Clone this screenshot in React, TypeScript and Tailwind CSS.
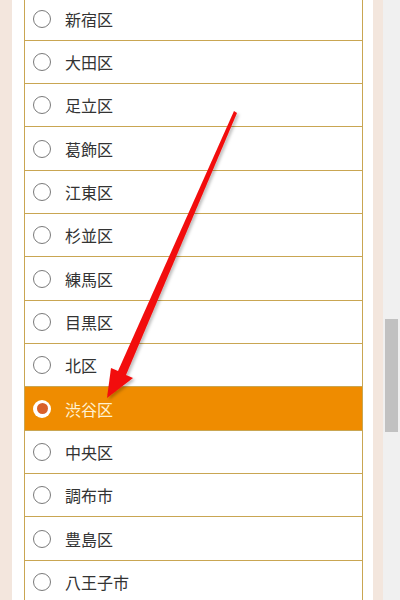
import React from 'react';

const wards = [
  '新宿区',
  '大田区',
  '足立区',
  '葛飾区',
  '江東区',
  '杉並区',
  '練馬区',
  '目黒区',
  '北区',
  '渋谷区',
  '中央区',
  '調布市',
  '豊島区',
  '八王子市',
];

const Radio = ({ checked }: { checked: boolean }) =>
  checked ? (
    <span className="w-[18px] h-[18px] rounded-full bg-white flex items-center justify-center shrink-0">
      <span className="w-[11px] h-[11px] rounded-full bg-[#d9612a]" />
    </span>
  ) : (
    <span className="w-[18px] h-[18px] rounded-full border border-[#7a7a7a] bg-white shrink-0" />
  );

const Row = ({ label, checked }: { label: string; checked: boolean }) => (
  <div
    className={`h-[43.33px] border-b border-[#c9a652] flex items-center pl-[8px] gap-[14px] ${
      checked ? 'bg-[#ef8c00]' : 'bg-white'
    }`}
  >
    <Radio checked={checked} />
    <span className={`text-[16px] leading-none ${checked ? 'text-[#fff1cf]' : 'text-[#333333]'}`}>{label}</span>
  </div>
);

const App = () => {
  return (
    <div
      className="relative w-[400px] h-[600px] overflow-hidden flex bg-white"
      style={{ fontFamily: '"Noto Sans CJK JP", "Noto Sans", sans-serif' }}
    >
      <div className="w-[12px] bg-[#f3e6dd]" />
      <div className="w-[12px] bg-white" />
      <div className="flex-1 border-x border-[#c9a652]">
        <div className="-mt-[2.6px]">
          {wards.map((w) => (
            <Row key={w} label={w} checked={w === '渋谷区'} />
          ))}
        </div>
      </div>
      <div className="w-[10px] bg-white" />
      <div className="w-[10px] bg-[#f3e6dd]" />
      <div className="w-[17px] bg-[#f0f0f0] pt-[319px] px-[2px]">
        <div className="h-[113px] bg-[#c1c1c1]" />
      </div>

      {/* red arrow pointing at the selected row */}
      <svg className="absolute inset-0 pointer-events-none" width="400" height="600" viewBox="0 0 400 600">
        <defs>
          <filter id="sh" x="-20%" y="-20%" width="140%" height="140%">
            <feDropShadow dx="2" dy="2" stdDeviation="1.5" floodColor="#000" floodOpacity="0.25" />
          </filter>
        </defs>
        <polygon
          points="234,111 237,113 126,375 133,378 107,398 111,368 118,371"
          fill="#f20d0d"
          filter="url(#sh)"
        />
      </svg>
    </div>
  );
};

export default App;
